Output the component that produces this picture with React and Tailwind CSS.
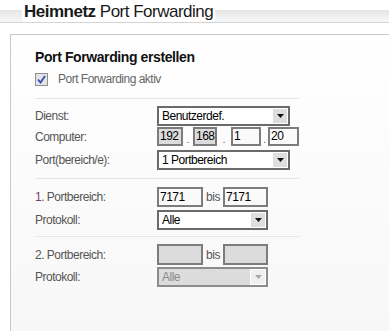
import React from 'react';

const Arrow = ({ disabled }) => (
  <svg width="7" height="4" viewBox="0 0 7 4">
    <path d="M0 0 H7 L3.5 4 Z" fill={disabled ? '#a8a8a8' : '#111'} />
  </svg>
);

const Select = ({ value, width, disabled }) => (
  <div
    className={`flex h-[20px] items-stretch border-2 ${disabled ? 'border-[#8c8c8c] bg-[#dcdcdc]' : 'border-[#6a6a6a] bg-white'}`}
    style={{ width }}
  >
    <span className={`flex-1 pl-[3px] text-[12px] leading-[16px] tracking-[-0.5px] ${disabled ? 'text-[#8a8a8a]' : 'text-black'}`}>
      {value}
    </span>
    <span
      className={`flex w-[16px] items-center justify-center border border-white ${disabled ? 'bg-[#f0f0f0]' : 'bg-[#dedede]'}`}
    >
      <Arrow disabled={disabled} />
    </span>
  </div>
);

const Box = ({ value = '', width, height = 20, gray }) => (
  <div
    className={`border-2 border-[#7c7c7c] pl-[1px] text-[12px] tracking-[-0.5px] text-black ${gray ? 'bg-[#dcdcdc]' : 'bg-[#fafafa]'}`}
    style={{ width, height, lineHeight: `${height - 4}px` }}
  >
    {value}
  </div>
);

const Row = ({ label, children, className = '' }) => (
  <div className={`flex items-center ${className}`}>
    <div className="w-[122px] text-[12px] tracking-[-0.5px] text-[#555]">{label}</div>
    {children}
  </div>
);

const Dot = ({ w }) => (
  <span className="self-end text-center text-[11px] leading-[14px] text-[#666]" style={{ width: w }}>
    .
  </span>
);

const Rule = ({ className = '' }) => <div className={`h-px w-[264px] bg-[#e6e6e6] ${className}`} />;

export default function App() {
  return (
    <div className="h-[331px] w-[389px] overflow-hidden bg-white font-['Liberation_Sans',Arial,sans-serif]">
      <div className="flex h-[23px] items-end border-b border-[#d4d4d4] bg-[linear-gradient(to_bottom,#ffffff_0px,#ffffff_10px,#e6e6e6_10px,#f7f7f7_22px)] pl-[22px]">
        <h1 className="bg-white px-[2px] text-[17px] leading-[20px] tracking-[-0.5px] text-[#1a1a1a]">
          <span className="font-bold">Heimnetz</span> Port Forwarding
        </h1>
      </div>

      <div className="ml-[10px] mt-[11px] h-[300px] border-l border-t border-[#c9c9c9] bg-[linear-gradient(to_bottom,#ffffff,#f7f7f7)] pl-[24px] pt-[14px]">
        <h2 className="text-[14px] font-bold leading-[17px] tracking-[-0.4px] text-[#111]">Port Forwarding erstellen</h2>

        <div className="mt-[7px] flex h-[13px] items-center">
          <span className="flex h-[13px] w-[13px] items-center justify-center border border-[#8f8f8f] bg-[#e4e4e4]">
            <svg width="9" height="9" viewBox="0 0 9 9">
              <path d="M1 4.5 L3.5 7.5 L8 1" fill="none" stroke="#2f4fb0" strokeWidth="1.8" />
            </svg>
          </span>
          <span className="ml-[10px] text-[12px] leading-[13px] tracking-[-0.5px] text-[#666]">Port Forwarding aktiv</span>
        </div>

        <Rule className="mt-[12px]" />

        <div className="mt-[7px] flex flex-col">
          <Row label="Dienst:">
            <Select value="Benutzerdef." width={133} />
          </Row>
          <Row label="Computer:" className="mt-[1px]">
            <div className="flex items-center">
              <Box value="192" width={26} height={19} gray />
              <Dot w={10} />
              <Box value="168" width={24} height={19} gray />
              <Dot w={14} />
              <Box value="1" width={30} height={19} />
              <Dot w={7} />
              <Box value="20" width={31} height={19} />
            </div>
          </Row>
          <Row label="Port(bereich/e):" className="mt-[4px]">
            <Select value="1 Portbereich" width={133} />
          </Row>
        </div>

        <Rule className="mt-[8px]" />

        <div className="mt-[8px] flex flex-col">
          <Row label={<><span className="text-[#7d3a70]">1.</span> Portbereich:</>}>
            <div className="flex items-center">
              <Box value="7171" width={46} />
              <span className="w-[20px] text-center text-[12px] tracking-[-0.5px] text-[#555]">bis</span>
              <Box value="7171" width={45} />
            </div>
          </Row>
          <Row label="Protokoll:" className="mt-[3px]">
            <Select value="Alle" width={111} />
          </Row>
        </div>

        <Rule className="mt-[6px]" />

        <div className="mt-[7px] flex flex-col">
          <Row label="2. Portbereich:">
            <div className="flex items-center">
              <Box width={46} height={21} gray />
              <span className="w-[20px] text-center text-[12px] tracking-[-0.5px] text-[#555]">bis</span>
              <Box width={45} height={21} gray />
            </div>
          </Row>
          <Row label="Protokoll:" className="mt-[2px]">
            <Select value="Alle" width={111} disabled />
          </Row>
        </div>
      </div>
    </div>
  );
}
